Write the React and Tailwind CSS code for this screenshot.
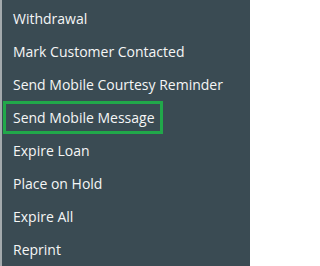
const items = [
  "Withdrawal",
  "Mark Customer Contacted",
  "Send Mobile Courtesy Reminder",
  "Send Mobile Message",
  "Expire Loan",
  "Place on Hold",
  "Expire All",
  "Reprint",
];

function MenuItem({ label, active }) {
  if (active) {
    return (
      <li className="h-[33px] flex items-center">
        <div className="ml-[1px] h-[33px] w-[160px] border-[3px] border-[#21a84a] pl-[7px] flex items-center">
          {label}
        </div>
      </li>
    );
  }
  return <li className="h-[33px] flex items-center pl-[11px]">{label}</li>;
}

export default function App() {
  return (
    <div className="w-[250px] h-[266px] bg-[#3a4b53] border-l-2 border-[#a3aaad] text-[#f5f6f6] text-[14px] pt-[2px] font-['Open_Sans','Noto_Sans',sans-serif]">
      <ul className="flex flex-col">
        {items.map((item) => (
          <MenuItem key={item} label={item} active={item === "Send Mobile Message"} />
        ))}
      </ul>
    </div>
  );
}
